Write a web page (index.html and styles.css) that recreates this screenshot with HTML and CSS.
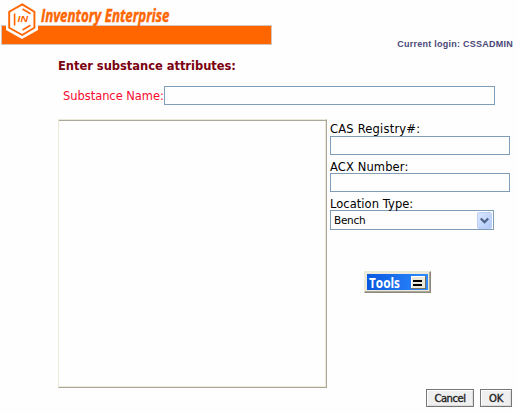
FILE: index.html
```html
<!DOCTYPE html>
<html lang="en">
<head>
<meta charset="utf-8">
<title>Inventory Enterprise</title>
<link rel="stylesheet" href="styles.css">
</head>
<body>
<header class="header">
  <svg class="brand" width="274" height="48" viewBox="0 0 274 48" role="img" aria-label="Inventory Enterprise">
    <rect x="1.5" y="25.5" width="270" height="19" fill="#ff6600" stroke="#d5c5bc"/>
    <path d="M22 1L38 10V30L22 39L6 30V10Z" fill="#fefefe"/>
    <path d="M22.2 4.4L34.4 11.7V27.8L22.2 35L9.2 27.8V11.7Z" fill="none" stroke="#ff6600" stroke-width="1.9"/>
    <path d="M14.6 13.5V25.5M22.5 9L30.5 13.8M22.5 30L30.5 25.2" fill="none" stroke="#ff6600" stroke-width="1.6"/>
    <text class="mark" x="17.5" y="22.4" textLength="10.5" lengthAdjust="spacingAndGlyphs">IN</text>
    <text class="brand-name" x="41" y="21.5" textLength="128.5" lengthAdjust="spacingAndGlyphs">Inventory Enterprise</text>
  </svg>
  <div class="login">Current login: CSSADMIN</div>
</header>
<main class="main">
  <h1 class="heading">Enter substance attributes:</h1>
  <div class="name-row">
    <label class="name-label" for="name">Substance Name:</label>
    <input class="field name-input" id="name" type="text">
  </div>
  <div class="columns">
    <div class="structure"></div>
    <div class="side">
      <label class="label cas" for="cas">CAS Registry#:</label>
      <input class="field" id="cas" type="text">
      <label class="label acx" for="acx">ACX Number:</label>
      <input class="field" id="acx" type="text">
      <div class="label loc">Location Type:</div>
      <div class="select">
        <span class="value">Bench</span>
        <svg class="arrow" width="15" height="17" viewBox="0 0 15 17">
          <defs><linearGradient id="a" x2="1" y2="1"><stop stop-color="#dce7ff"/><stop offset="1" stop-color="#aec8f7"/></linearGradient></defs>
          <rect x=".5" y=".5" width="14" height="16" rx="1.5" fill="url(#a)" stroke="#bdcff5"/>
          <path d="M3.8 6.5L7.5 10.2L11.2 6.5" fill="none" stroke="#4d6185" stroke-width="2.2"/>
        </svg>
      </div>
      <div class="tools">
        <svg width="61" height="16" viewBox="0 0 61 16">
          <text class="tools-text" x="2" y="14" textLength="31" lengthAdjust="spacingAndGlyphs">Tools</text>
          <rect x="44" y="2" width="15" height="13" fill="#716f64"/>
          <rect x="44" y="2" width="14" height="12" fill="#fff"/>
          <rect x="45" y="3" width="13" height="11" fill="#ece9d8"/>
          <path d="M46 7H55M46 11H55" stroke="#000" stroke-width="2"/>
        </svg>
      </div>
    </div>
  </div>
</main>
<footer class="footer">
  <button class="btn cancel"><span>Cancel</span></button>
  <button class="btn ok"><span>OK</span></button>
</footer>
</body>
</html>
```
FILE: styles.css
```css
* { box-sizing: border-box; }
body {
  margin: 0;
  width: 517px;
  height: 413px;
  overflow: hidden;
  background: #fefefe;
  color: #000;
  font-family: "DejaVu Sans", Verdana, sans-serif;
  font-size: 11px;
  display: flex;
  flex-direction: column;
}
.header {
  display: flex;
  justify-content: space-between;
  height: 58px;
  padding-right: 4px;
}
.brand { display: block; }
.mark { font: italic bold 9.5px "Liberation Sans", sans-serif; fill: #ff6600; }
.brand-name {
  font: italic bold 18px "Open Sans", sans-serif;
  fill: #ff6600;
  stroke: #ff6600;
  stroke-width: 0.45px;
}
.login {
  margin-top: 38px;
  font: bold 9px/12px "Liberation Sans", sans-serif;
  letter-spacing: 0.25px;
  color: #4a4778;
  white-space: nowrap;
}
.main { padding-left: 58px; height: 331px; }
.heading {
  margin: 0;
  height: 28px;
  font-size: 11.5px;
  line-height: 16px;
  letter-spacing: -0.03px;
  color: #7b0010;
  white-space: nowrap;
}
.name-row { display: flex; height: 33px; padding-left: 5px; }
.name-label {
  width: 101px;
  font-size: 11.5px;
  line-height: 20px;
  letter-spacing: -0.05px;
  color: #fa0a30;
  white-space: nowrap;
}
.field {
  display: block;
  width: 180px;
  height: 19px;
  margin: 0;
  padding: 0 3px;
  border: 1px solid #7f9db9;
  border-radius: 0;
  background: #fefefe;
  outline: none;
}
.name-input { width: 331px; }
.columns { display: flex; gap: 3px; }
.structure {
  width: 269px;
  height: 269px;
  border: 1px solid;
  border-color: #ece9d8 #aca899 #aca899 #ece9d8;
  box-shadow: inset 0 1px #aca899, inset -1px -1px #ece9d8;
}
.side { width: 180px; padding-top: 3px; }
.label {
  display: block;
  font-size: 11.5px;
  line-height: 14px;
  white-space: nowrap;
}
.cas { letter-spacing: 0.2px; }
.acx { margin-top: 5px; height: 13px; letter-spacing: 0.12px; }
.loc { margin-top: 5px; height: 13px; letter-spacing: 0.05px; }
.select {
  display: flex;
  justify-content: space-between;
  width: 164px;
  height: 20px;
  padding: 1px 1px 0 3px;
  border: 1px solid #7f9db9;
}
.value { font-size: 10.5px; line-height: 17px; letter-spacing: -0.3px; }
.tools {
  width: 67px;
  height: 22px;
  margin: 41px 0 0 34px;
  padding: 1px;
  border: 1px solid;
  border-color: #ece9d8 #8b887b #8b887b #ece9d8;
  background: #ece9d8;
  box-shadow: inset -1px -1px #aca899;
}
.tools svg {
  display: block;
  overflow: visible;
  margin: 1px;
  background: linear-gradient(90deg, #0a57e0, #2e8bff);
}
.tools-text { font: bold 14px "Open Sans", sans-serif; fill: #fff; }
.footer {
  display: flex;
  justify-content: flex-end;
  gap: 6px;
  padding-right: 5px;
}
.btn {
  height: 18px;
  padding: 0;
  border: 1px solid #777;
  border-radius: 0;
  background: #efefef;
  box-shadow: inset 1px 1px #fff, inset -1px -1px #ddd;
  font: 400 10px/15px "DejaVu Sans", Verdana, sans-serif;
  color: #222;
  -webkit-text-stroke: 0.35px #222;
}
.cancel { width: 48px; letter-spacing: -0.45px; }
.ok { width: 32px; letter-spacing: -0.3px; }
```
